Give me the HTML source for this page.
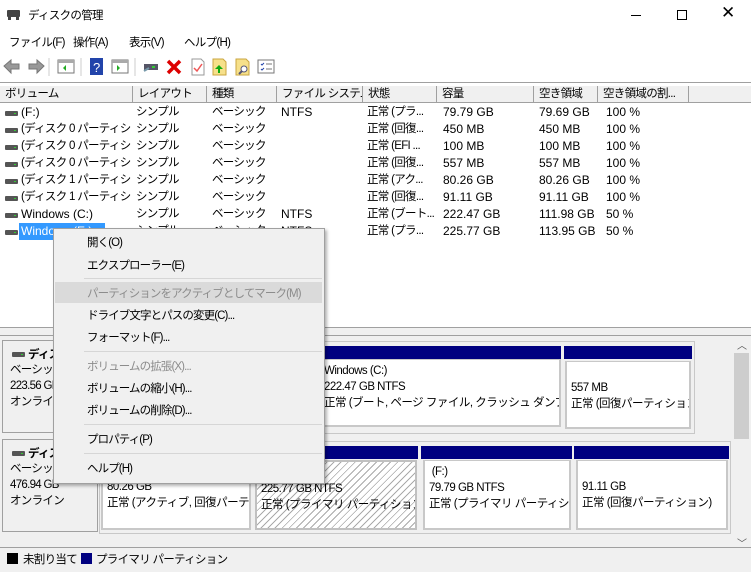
<!DOCTYPE html>
<html><head><meta charset="utf-8"><style>
*{box-sizing:border-box;margin:0;padding:0}
body{width:751px;height:572px;overflow:hidden;background:#fff;font-family:"Liberation Sans","Noto Sans CJK JP",sans-serif;font-size:12px;color:#000;position:relative}
.a{position:absolute;white-space:nowrap}
.j{font-size:11.5px;letter-spacing:-0.7px}
.hd{position:absolute;top:86px;height:17px;background:#f0f0f0;border-right:1px solid #a0a0a0;border-bottom:1px solid #a0a0a0;padding-left:5px;line-height:16px;font-size:11.5px;letter-spacing:-0.7px;overflow:hidden;white-space:nowrap}
.row{position:absolute;left:0;height:17px;line-height:17px;width:700px}
.row span{position:absolute;overflow:hidden;white-space:nowrap}
.di{position:absolute;width:13px;height:5px;background:#555;border-radius:1px}
.di:after{content:"";position:absolute;right:2px;top:2px;width:2px;height:1px;background:#3c3}
.mi{position:absolute;left:87px;font-size:11.5px;letter-spacing:-0.9px;white-space:nowrap}
.dis{color:#8c8c8c}
.sep{position:absolute;left:84px;width:238px;height:1px;background:#d6d6d6}
.bar{position:absolute;background:#000080;height:13px}
.pin{position:absolute;border:2px solid #c8c8c8;border-top:1px solid #c8c8c8;background:#fff;padding:3px 4px;line-height:16px;white-space:nowrap;overflow:hidden;font-size:11.5px;letter-spacing:-0.5px}
</style></head><body>
<!-- title -->
<div class="a" style="left:7px;top:10px;width:13px;height:7px;background:#444;border-radius:1px"></div>
<div class="a" style="left:8px;top:17px;width:3px;height:3px;background:#444"></div><div class="a" style="left:16px;top:17px;width:3px;height:3px;background:#444"></div>
<div class="a j" style="left:28px;top:7px">ディスクの管理</div>
<div class="a" style="left:631px;top:15px;width:10px;height:1px;background:#000"></div>
<div class="a" style="left:677px;top:10px;width:10px;height:10px;border:1px solid #000"></div>
<div class="a" style="left:721px;top:3px;font-size:17px;font-weight:300">✕</div>
<!-- menu -->
<div class="a j" style="left:9px;top:34px">ファイル(F)</div>
<div class="a j" style="left:73px;top:34px">操作(A)</div>
<div class="a j" style="left:129px;top:34px">表示(V)</div>
<div class="a j" style="left:184px;top:34px">ヘルプ(H)</div>
<!-- toolbar -->
<svg class="a" style="left:0;top:55px" width="280" height="24">
<path d="M4 11 L11 5 V9 H19 V14 H11 V18Z" fill="#999" stroke="#777"/>
<path d="M44 11 L37 5 V9 H29 V14 H37 V18Z" fill="#999" stroke="#777"/>
<line x1="49" y1="3" x2="49" y2="21" stroke="#ccc"/>
<rect x="58" y="5" width="16" height="13" fill="#fff" stroke="#777"/><rect x="58" y="5" width="16" height="3" fill="#aaa"/><path d="M66 10 L63 13 L66 16Z" fill="#2a2"/>
<line x1="81" y1="3" x2="81" y2="21" stroke="#ccc"/>
<rect x="90" y="3" width="13" height="17" fill="#2244aa"/><text x="93" y="17" fill="#fff" font-size="13" font-family="Liberation Sans">?</text>
<rect x="112" y="5" width="16" height="13" fill="#fff" stroke="#777"/><rect x="112" y="5" width="16" height="3" fill="#aaa"/><path d="M117 10 L120 13 L117 16Z" fill="#2a2"/>
<line x1="135" y1="3" x2="135" y2="21" stroke="#ccc"/>
<rect x="144" y="9" width="14" height="6" fill="#556"/><rect x="152" y="11" width="3" height="2" fill="#3c3"/><path d="M144 16 L149 13" stroke="#79a" stroke-width="2"/>
<path d="M168 6 L180 18 M180 6 L168 18" stroke="#d00" stroke-width="3.5"/>
<path d="M192 4 H201 L204 7 V20 H192Z" fill="#fff" stroke="#999"/><path d="M194 13 L197 16 L202 9" stroke="#e55" stroke-width="1.5" fill="none"/>
<path d="M213 4 H223 L226 7 V20 H213Z" fill="#f6e08a" stroke="#caa640"/><path d="M219 10 L215 14 H218 V18 H220 V14 H223Z" fill="#1a1"/>
<path d="M236 4 H246 L249 7 V20 H236Z" fill="#f6e08a" stroke="#caa640"/><circle cx="244" cy="14" r="3" fill="#fff" stroke="#557"/><path d="M242 16 L239 19" stroke="#557" stroke-width="2"/>
<rect x="258" y="5" width="16" height="13" fill="#fff" stroke="#777"/><path d="M261 9 L262 10 L264 8 M261 14 L262 15 L264 13" stroke="#24a" fill="none"/><path d="M266 9 H272 M266 14 H272" stroke="#777"/>
</svg>
<div class="a" style="left:0;top:82px;width:751px;height:1px;background:#a0a0a0"></div>
<!-- header -->
<div class="hd" style="left:0;width:133px">ボリューム</div>
<div class="hd" style="left:133px;width:74px">レイアウト</div>
<div class="hd" style="left:207px;width:70px">種類</div>
<div class="hd" style="left:277px;width:86px">ファイル システム</div>
<div class="hd" style="left:363px;width:74px">状態</div>
<div class="hd" style="left:437px;width:97px">容量</div>
<div class="hd" style="left:534px;width:64px">空き領域</div>
<div class="hd" style="left:598px;width:91px">空き領域の割...</div>
<div class="hd" style="left:689px;width:62px;border-right:none"></div>
<!-- rows -->
<div class="row" style="top:104px"><i class="di" style="left:5px;top:7px"></i><span style="left:21px">(F:)</span><span class="j" style="left:136px">シンプル</span><span class="j" style="left:212px">ベーシック</span><span style="left:281px">NTFS</span><span class="j" style="left:367px;width:68px">正常 (プラ...</span><span style="left:443px">79.79 GB</span><span style="left:539px">79.69 GB</span><span style="left:606px">100 %</span></div>
<div class="row" style="top:121px"><i class="di" style="left:5px;top:7px"></i><span class="j" style="left:21px;width:110px">(ディスク 0 パーティシ...</span><span class="j" style="left:136px">シンプル</span><span class="j" style="left:212px">ベーシック</span><span class="j" style="left:367px;width:68px">正常 (回復...</span><span style="left:443px">450 MB</span><span style="left:539px">450 MB</span><span style="left:606px">100 %</span></div>
<div class="row" style="top:138px"><i class="di" style="left:5px;top:7px"></i><span class="j" style="left:21px;width:110px">(ディスク 0 パーティシ...</span><span class="j" style="left:136px">シンプル</span><span class="j" style="left:212px">ベーシック</span><span class="j" style="left:367px;width:68px">正常 (EFI ...</span><span style="left:443px">100 MB</span><span style="left:539px">100 MB</span><span style="left:606px">100 %</span></div>
<div class="row" style="top:155px"><i class="di" style="left:5px;top:7px"></i><span class="j" style="left:21px;width:110px">(ディスク 0 パーティシ...</span><span class="j" style="left:136px">シンプル</span><span class="j" style="left:212px">ベーシック</span><span class="j" style="left:367px;width:68px">正常 (回復...</span><span style="left:443px">557 MB</span><span style="left:539px">557 MB</span><span style="left:606px">100 %</span></div>
<div class="row" style="top:172px"><i class="di" style="left:5px;top:7px"></i><span class="j" style="left:21px;width:110px">(ディスク 1 パーティシ...</span><span class="j" style="left:136px">シンプル</span><span class="j" style="left:212px">ベーシック</span><span class="j" style="left:367px;width:68px">正常 (アク...</span><span style="left:443px">80.26 GB</span><span style="left:539px">80.26 GB</span><span style="left:606px">100 %</span></div>
<div class="row" style="top:189px"><i class="di" style="left:5px;top:7px"></i><span class="j" style="left:21px;width:110px">(ディスク 1 パーティシ...</span><span class="j" style="left:136px">シンプル</span><span class="j" style="left:212px">ベーシック</span><span class="j" style="left:367px;width:68px">正常 (回復...</span><span style="left:443px">91.11 GB</span><span style="left:539px">91.11 GB</span><span style="left:606px">100 %</span></div>
<div class="row" style="top:206px"><i class="di" style="left:5px;top:7px"></i><span style="left:21px">Windows (C:)</span><span class="j" style="left:136px">シンプル</span><span class="j" style="left:212px">ベーシック</span><span style="left:281px">NTFS</span><span class="j" style="left:367px;width:68px">正常 (ブート...</span><span style="left:443px">222.47 GB</span><span style="left:539px">111.98 GB</span><span style="left:606px">50 %</span></div>
<div class="row" style="top:223px"><i class="di" style="left:5px;top:7px"></i><span style="left:19px;width:86px;height:17px;background:#3399ff;color:#fff;padding-left:2px">Windows (E:)</span><span class="j" style="left:136px">シンプル</span><span class="j" style="left:212px">ベーシック</span><span style="left:281px">NTFS</span><span class="j" style="left:367px;width:68px">正常 (プラ...</span><span style="left:443px">225.77 GB</span><span style="left:539px">113.95 GB</span><span style="left:606px">50 %</span></div>
<!-- splitter -->
<div class="a" style="left:0;top:327px;width:751px;height:9px;background:#f0f0f0;border-top:1px solid #a0a0a0;border-bottom:1px solid #a0a0a0"></div>
<!-- bottom pane -->
<div class="a" style="left:0;top:336px;width:751px;height:212px;background:#f0f0f0"></div>
<div class="a" style="left:733px;top:336px;width:17px;height:212px;background:#f0f0f0"></div>
<div class="a" style="left:734px;top:353px;width:15px;height:86px;background:#cdcdcd"></div>
<div class="a" style="left:737px;top:337px;font-size:10px;color:#555">︿</div>
<div class="a" style="left:737px;top:535px;font-size:10px;color:#555">﹀</div>
<!-- disk labels -->
<div class="a" style="left:2px;top:340px;width:96px;height:93px;background:#f0f0f0;border:1px solid #a0a0a0"></div>
<div class="a" style="left:2px;top:439px;width:96px;height:93px;background:#f0f0f0;border:1px solid #a0a0a0"></div>
<i class="di" style="left:12px;top:352px"></i><div class="a j" style="left:28px;top:346px;font-weight:bold">ディスク 0</div>
<div class="a j" style="left:10px;top:362px;line-height:16px">ベーシック<br>223.56 GB<br>オンライン</div>
<i class="di" style="left:12px;top:451px"></i><div class="a j" style="left:28px;top:445px;font-weight:bold">ディスク 1</div>
<div class="a j" style="left:10px;top:461px;line-height:16px">ベーシック<br>476.94 GB<br>オンライン</div>
<!-- disk0 partitions -->
<div class="a" style="left:99px;top:341px;width:596px;height:93px;border:1px solid #c8c8c8;background:#f0f0f0"></div>
<div class="bar" style="left:100px;top:346px;width:461px"></div>
<div class="bar" style="left:564px;top:346px;width:128px"></div>
<div class="pin" style="left:318px;top:359px;width:243px;height:68px">Windows (C:)<br>222.47 GB NTFS<br>正常 (ブート, ページ ファイル, クラッシュ ダンプ, ベーシ</div>
<div class="pin" style="left:565px;top:361px;width:126px;height:68px;padding-top:18px">557 MB<br>正常 (回復パーティション</div>
<!-- disk1 partitions -->
<div class="a" style="left:99px;top:441px;width:632px;height:93px;border:1px solid #c8c8c8;background:#f0f0f0"></div>
<div class="bar" style="left:100px;top:446px;width:151px"></div>
<div class="bar" style="left:254px;top:446px;width:164px"></div>
<div class="bar" style="left:421px;top:446px;width:151px"></div>
<div class="bar" style="left:574px;top:446px;width:155px"></div>
<div class="pin" style="left:101px;top:460px;width:150px;height:70px;padding-top:18px">80.26 GB<br>正常 (アクティブ, 回復パーティ</div>
<div class="pin" style="left:255px;top:460px;width:162px;height:70px;border:2px solid #c0c0c0;background:repeating-linear-gradient(135deg,#fff 0 4px,#aaa 4px 5px)">(E:)<br>225.77 GB NTFS<br>正常 (プライマリ パーティション)</div>
<div class="pin" style="left:423px;top:460px;width:148px;height:70px">&nbsp;(F:)<br>79.79 GB NTFS<br>正常 (プライマリ パーティション</div>
<div class="pin" style="left:576px;top:460px;width:152px;height:70px;padding-top:18px">91.11 GB<br>正常 (回復パーティション)</div>
<!-- legend -->
<div class="a" style="left:0;top:547px;width:751px;height:1px;background:#a0a0a0"></div>
<div class="a" style="left:0;top:548px;width:751px;height:24px;background:#f0f0f0"></div>
<div class="a" style="left:7px;top:553px;width:11px;height:11px;background:#000"></div>
<div class="a j" style="left:23px;top:551px">未割り当て</div>
<div class="a" style="left:81px;top:553px;width:11px;height:11px;background:#000080"></div>
<div class="a j" style="left:96px;top:551px">プライマリ パーティション</div>
<!-- context menu -->
<div class="a" style="left:53px;top:228px;width:272px;height:256px;background:#f0f0f0;border:1px solid #a0a0a0;box-shadow:2px 2px 3px rgba(0,0,0,.3)"></div>
<div class="mi" style="top:234px">開く(O)</div>
<div class="mi" style="top:257px">エクスプローラー(E)</div>
<div class="sep" style="top:278px"></div>
<div class="a" style="left:55px;top:282px;width:267px;height:21px;background:#dadada"></div>
<div class="mi dis" style="top:285px">パーティションをアクティブとしてマーク(M)</div>
<div class="mi" style="top:307px">ドライブ文字とパスの変更(C)...</div>
<div class="mi" style="top:329px">フォーマット(F)...</div>
<div class="sep" style="top:351px"></div>
<div class="mi dis" style="top:358px">ボリュームの拡張(X)...</div>
<div class="mi" style="top:380px">ボリュームの縮小(H)...</div>
<div class="mi" style="top:402px">ボリュームの削除(D)...</div>
<div class="sep" style="top:424px"></div>
<div class="mi" style="top:431px">プロパティ(P)</div>
<div class="sep" style="top:453px"></div>
<div class="mi" style="top:460px">ヘルプ(H)</div>
</body></html>
